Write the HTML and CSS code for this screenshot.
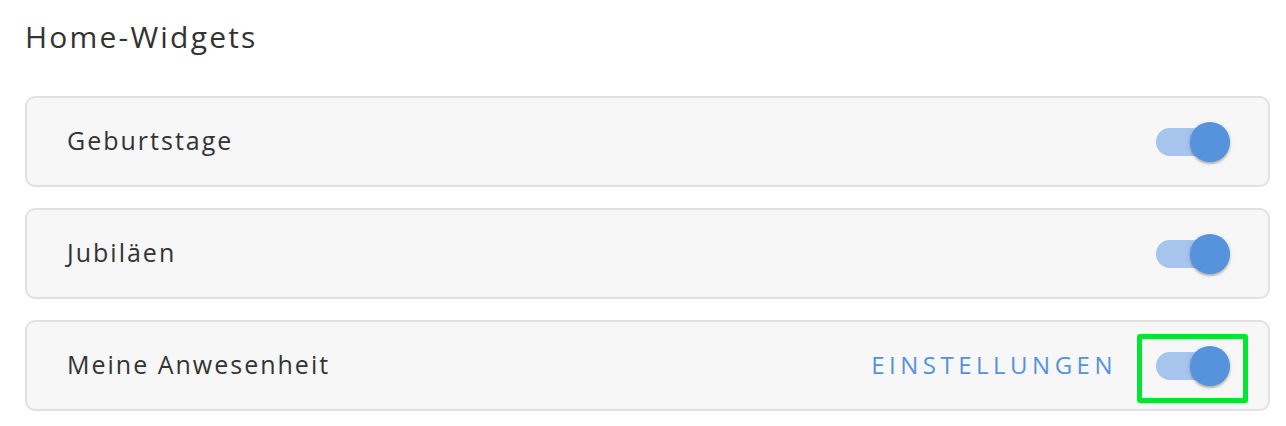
FILE: index.html
```html
<!DOCTYPE html>
<html lang="de">
<head>
<meta charset="utf-8">
<title>Home-Widgets</title>
<link rel="stylesheet" href="styles.css">
</head>
<body>
<main class="page">
  <h1 class="title">Home-Widgets</h1>
  <div class="list">
    <div class="card">
      <span class="label">Geburtstage</span>
      <span class="switch"><span class="track"></span><span class="thumb"></span></span>
    </div>
    <div class="card">
      <span class="label">Jubiläen</span>
      <span class="switch"><span class="track"></span><span class="thumb"></span></span>
    </div>
    <div class="card">
      <span class="label">Meine Anwesenheit</span>
      <span class="action">EINSTELLUNGEN</span>
      <span class="focus">
        <span class="switch"><span class="track"></span><span class="thumb"></span></span>
      </span>
    </div>
  </div>
</main>
</body>
</html>
```

FILE: styles.css
```css
html, body {
  margin: 0;
  padding: 0;
  background: #ffffff;
}

.page {
  font-family: "Open Sans", "Noto Sans", sans-serif;
  color: #333333;
  padding: 17px 16px 0 25px;
}

.title {
  margin: 0;
  font-size: 30px;
  font-weight: 400;
  line-height: 40px;
  letter-spacing: 2.2px;
  color: #333333;
}

.list {
  display: flex;
  flex-direction: column;
  gap: 21px;
  margin-top: 39px;
}

.card {
  box-sizing: border-box;
  height: 91px;
  display: flex;
  align-items: center;
  padding: 0 38px 0 40px;
  background: #f7f7f7;
  border: 2px solid #e1e1e1;
  border-radius: 10px;
}

.label {
  flex: 1;
  font-size: 25px;
  letter-spacing: 2px;
  padding-bottom: 3px;
  color: #333333;
}

.action {
  font-size: 24px;
  letter-spacing: 4.5px;
  padding-bottom: 3px;
  color: #5592dc;
}

.switch {
  position: relative;
  display: block;
  width: 74px;
  height: 40px;
  flex: none;
}

.track {
  position: absolute;
  left: 0;
  top: 6px;
  width: 68px;
  height: 28px;
  border-radius: 14px;
  background: #a6c4ec;
}

.thumb {
  position: absolute;
  right: 0;
  top: 0;
  width: 40px;
  height: 40px;
  border-radius: 50%;
  background: #5593dd;
  box-shadow: 0 2px 2px rgba(0, 0, 0, 0.22), 0 1px 5px rgba(0, 0, 0, 0.12);
}

.focus {
  display: block;
  flex: none;
  margin: 5px -18px 0 20px;
  padding: 7px 13px 12px 14px;
  border: 5px solid #00e633;
  border-radius: 3px;
}
```
